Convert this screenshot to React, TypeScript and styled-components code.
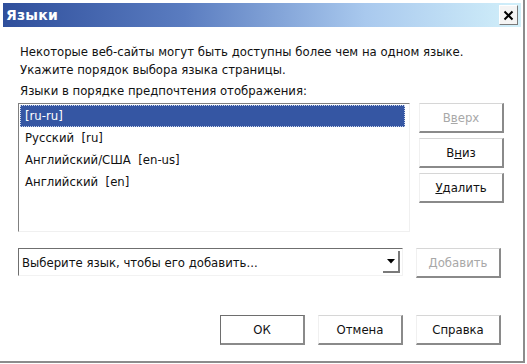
import styled, { createGlobalStyle } from "styled-components";

const GlobalStyle = createGlobalStyle`
  body {
    margin: 0;
    background: #ffffff;
    font-family: "DejaVu Sans Condensed", "DejaVu Sans", Tahoma, sans-serif;
    font-stretch: condensed;
  }
`;

const Window = styled.div`
  width: 525px;
  height: 363px;
  box-sizing: border-box;
  border-right: 2px solid #8c8c8c;
  border-bottom: 2px solid #8c8c8c;
  background: #ffffff;
  display: flex;
  flex-direction: column;
  color: #111;
  font-size: 13px;
`;

const TitleBar = styled.div`
  margin: 3px 2px 0 3px;
  height: 24px;
  display: flex;
  align-items: center;
  justify-content: space-between;
  padding: 0 3px 0 3px;
  background: linear-gradient(to right, #2f4f9c 0%, #5a7cc0 35%, #a9c9ee 70%, #d2f0fa 100%);
`;

const Title = styled.span`
  color: #ffffff;
  font-family: "DejaVu Sans", Tahoma, sans-serif;
  font-stretch: normal;
  font-weight: bold;
  font-size: 14px;
  letter-spacing: 0.2px;
`;

const CloseButton = styled.div`
  width: 17px;
  height: 18px;
  background: #f4f4f4;
  border-top: 1px solid #ffffff;
  border-left: 1px solid #ffffff;
  border-right: 1px solid #7a7a7a;
  border-bottom: 1px solid #7a7a7a;
  display: flex;
  align-items: center;
  justify-content: center;
`;

const Body = styled.div`
  padding: 16px 0 0 18px;
  display: flex;
  flex-direction: column;
`;

const Intro = styled.p`
  margin: 0 0 0 2px;
  line-height: 18px;
`;

const Label = styled.div`
  margin: 3px 0 3px 2px;
  line-height: 18px;
`;

const MainRow = styled.div`
  display: flex;
  gap: 9px;
`;

const ListBox = styled.div`
  width: 392px;
  height: 129px;
  box-sizing: border-box;
  border-top: 1px solid #808080;
  border-left: 1px solid #808080;
  border-right: 1px solid #f0f0f0;
  border-bottom: 1px solid #f0f0f0;
  padding: 1px 4px 0 1px;
`;

const ListItem = styled.div<{ $selected?: boolean }>`
  height: 22px;
  line-height: 21px;
  padding-left: 5px;
  box-sizing: border-box;
  white-space: pre;
  background: ${(p) => (p.$selected ? "#3556a3" : "transparent")};
  color: ${(p) => (p.$selected ? "#ffffff" : "#111")};
  outline: ${(p) => (p.$selected ? "1px dotted #c9d4ea" : "none")};
  outline-offset: -1px;
`;

const SideButtons = styled.div`
  display: flex;
  flex-direction: column;
  gap: 5px;
`;

const Button = styled.div<{ $disabled?: boolean; $default?: boolean }>`
  width: 85px;
  height: 30px;
  box-sizing: border-box;
  display: flex;
  align-items: center;
  justify-content: center;
  background: #ffffff;
  border-top: 1px solid ${(p) => (p.$default ? "#6e6e6e" : "#d6d6d6")};
  border-left: 1px solid ${(p) => (p.$default ? "#6e6e6e" : "#f0f0f0")};
  border-right: 2px solid #8a8a8a;
  border-bottom: 2px solid #8a8a8a;
  color: ${(p) => (p.$disabled ? "#a8a8a8" : "#111")};
  u {
    text-decoration: underline;
  }
`;

const ComboRow = styled.div`
  display: flex;
  gap: 13px;
  margin-top: 16px;
`;

const Combo = styled.div`
  width: 385px;
  height: 28px;
  box-sizing: border-box;
  border-top: 1px solid #6f6f6f;
  border-left: 1px solid #6f6f6f;
  border-right: 1px solid #f2f2f2;
  border-bottom: 1px solid #f2f2f2;
  display: flex;
  align-items: center;
  justify-content: space-between;
  padding: 0 2px 0 3px;
`;

const DropButton = styled.div`
  width: 17px;
  height: 22px;
  box-sizing: border-box;
  border-right: 2px solid #7a7a7a;
  border-bottom: 2px solid #7a7a7a;
  display: flex;
  align-items: center;
  justify-content: center;
`;

const Footer = styled.div`
  display: flex;
  justify-content: flex-end;
  gap: 13px;
  margin: 37px 22px 0 0;
`;

export default function App() {
  return (
    <>
      <GlobalStyle />
      <Window>
        <TitleBar>
          <Title>Языки</Title>
          <CloseButton>
            <svg width="11" height="11" viewBox="0 0 11 11">
              <path d="M1.5 1.5 L9.5 9.5 M9.5 1.5 L1.5 9.5" stroke="#000" strokeWidth="2" />
            </svg>
          </CloseButton>
        </TitleBar>
        <Body>
          <Intro>
            Некоторые веб-сайты могут быть доступны более чем на одном языке.
            <br />
            Укажите порядок выбора языка страницы.
          </Intro>
          <Label>Языки в порядке предпочтения отображения:</Label>
          <MainRow>
            <ListBox>
              <ListItem $selected>[ru-ru]</ListItem>
              <ListItem>Русский  [ru]</ListItem>
              <ListItem>Английский/США  [en-us]</ListItem>
              <ListItem>Английский  [en]</ListItem>
            </ListBox>
            <SideButtons>
              <Button $disabled>В<u>в</u>ерх</Button>
              <Button>В<u>н</u>из</Button>
              <Button><u>У</u>далить</Button>
            </SideButtons>
          </MainRow>
          <ComboRow>
            <Combo>
              <span>Выберите язык, чтобы его добавить...</span>
              <DropButton>
                <svg width="8" height="5" viewBox="0 0 8 5">
                  <path d="M0 0 H8 L4 4.5 Z" fill="#000" />
                </svg>
              </DropButton>
            </Combo>
            <Button $disabled><u>Д</u>обавить</Button>
          </ComboRow>
          <Footer>
            <Button $default>ОК</Button>
            <Button>Отмена</Button>
            <Button>Справка</Button>
          </Footer>
        </Body>
      </Window>
    </>
  );
}
